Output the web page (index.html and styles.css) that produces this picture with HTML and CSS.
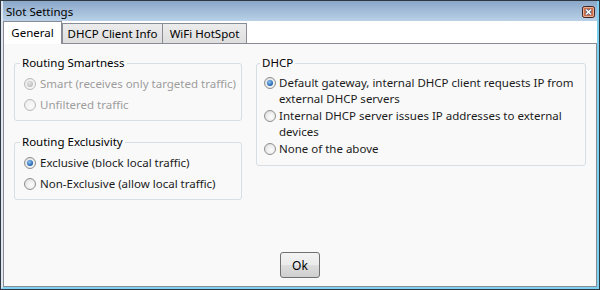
FILE: index.html
```html
<!DOCTYPE html>
<html lang="en">
<head>
  <meta charset="UTF-8">
  <title>Slot Settings</title>
  <link rel="stylesheet" href="styles.css">
</head>
<body>
  <div class="window">
    <div class="frame">
      <div class="titlebar">
        <span class="title">Slot Settings</span>
        <button class="close" title="Close">
          <svg width="13" height="12" viewBox="0 0 13 12">
            <rect x="0.5" y="0.5" width="12" height="11" rx="2" fill="#cf6f4c" stroke="#3a2520"/>
            <rect x="1.5" y="1.5" width="10" height="9" rx="1" fill="none" stroke="#eab29a"/>
            <path d="M4 3.5 L9 8.5 M9 3.5 L4 8.5" stroke="#4d5f73" stroke-width="3"/>
            <path d="M4 3.5 L9 8.5 M9 3.5 L4 8.5" stroke="#ffffff" stroke-width="1.6"/>
          </svg>
        </button>
      </div>

      <div class="tabs">
        <div class="tab active">General</div>
        <div class="tab tab-dhcp">DHCP Client Info</div>
        <div class="tab tab-wifi">WiFi HotSpot</div>
      </div>

      <div class="panel">
        <div class="columns">
          <div class="col-left">
            <fieldset class="group group-left">
              <legend>Routing Smartness</legend>
              <label class="option disabled"><span class="radio checked"></span>Smart (receives only targeted traffic)</label>
              <label class="option disabled"><span class="radio"></span>Unfiltered traffic</label>
            </fieldset>
            <fieldset class="group group-left group-second">
              <legend>Routing Exclusivity</legend>
              <label class="option"><span class="radio checked"></span>Exclusive (block local traffic)</label>
              <label class="option"><span class="radio"></span>Non-Exclusive (allow local traffic)</label>
            </fieldset>
          </div>
          <fieldset class="group group-dhcp">
            <legend>DHCP</legend>
            <label class="option"><span class="radio checked"></span><span>Default gateway, internal DHCP client requests IP from external DHCP servers</span></label>
            <label class="option"><span class="radio"></span><span>Internal DHCP server issues IP addresses to external devices</span></label>
            <label class="option"><span class="radio"></span><span>None of the above</span></label>
          </fieldset>
        </div>
        <div class="actions">
          <button class="btn">Ok</button>
        </div>
      </div>
    </div>
  </div>
</body>
</html>
```

FILE: styles.css
```css
/* Base */
* {
  box-sizing: border-box;
}

body {
  margin: 0;
  font-family: "Noto Sans", "Open Sans", sans-serif;
  font-size: 11.5px;
  color: #1b1b1b;
  background: #ffffff;
}

/* Window frame */
.window {
  width: 600px;
  height: 290px;
  border: 1px solid #2f3740;
  display: flex;
  flex-direction: column;
}

.frame {
  flex: 1;
  display: flex;
  flex-direction: column;
  background: #ffffff;
  border-left: 2px solid #dfe8f0;
  border-right: 2px solid #7fd1f1;
  border-bottom: 2px solid #7fd1f1;
}

.titlebar {
  height: 20px;
  display: flex;
  align-items: center;
  justify-content: space-between;
  padding: 0 2px 0 3px;
  background: linear-gradient(#8ba7c8, #b9d1e8);
}

.title {
  font-size: 11.5px;
  color: #000000;
}

.close {
  display: block;
  padding: 0;
  border: none;
  background: none;
  height: 12px;
  margin-top: 2px;
}

.close svg {
  display: block;
}

/* Tabs */
.tabs {
  height: 22px;
  display: flex;
  align-items: flex-end;
  position: relative;
  z-index: 1;
}

.tab {
  height: 20px;
  border: 1px solid #898c95;
  border-bottom: none;
  background: linear-gradient(#ececec, #dedede);
  color: #000000;
  font-size: 11.5px;
  line-height: 20px;
  text-align: center;
  white-space: nowrap;
}

.tab.active {
  width: 59px;
  height: 23px;
  margin-bottom: -1px;
  line-height: 21px;
  background: #ffffff;
}

.tab-dhcp {
  width: 101px;
}

.tab-wifi {
  width: 85px;
  margin-left: -1px;
}

/* Panel */
.panel {
  flex: 1;
  display: flex;
  flex-direction: column;
  border: 1px solid #898c95;
  background: #f9f9f9;
  padding: 11px 10px 8px;
}

.columns {
  display: grid;
  grid-template-columns: 228px 330px;
  column-gap: 14px;
  align-items: start;
}

/* Group boxes */
.group {
  margin: 0;
  min-width: 0;
  border: 1px solid #d5dfe5;
  border-radius: 3px;
}

.group legend {
  padding: 0 2px;
  margin-left: -4px;
  line-height: 16px;
  color: #000000;
}

.group-left {
  padding: 2px 8px 5px 9px;
}

.group-second {
  margin-top: 13px;
}

.group-dhcp {
  padding: 4px 6px 7px 7px;
}

/* Radio options */
.option {
  display: flex;
  align-items: center;
  gap: 4px;
  height: 21px;
  color: #1b1b1b;
  white-space: nowrap;
}

.group-dhcp .option {
  align-items: flex-start;
  gap: 3px;
  height: auto;
  line-height: 16px;
  margin-bottom: 1px;
  white-space: normal;
}

.group-dhcp .option .radio {
  margin-top: 2px;
}

.radio {
  flex: none;
  width: 12px;
  height: 12px;
  border-radius: 50%;
  border: 1px solid #8e8f8f;
  background: radial-gradient(circle at 60% 60%, #fdfdfd 0, #ebebeb 55%, #cfcfcf 100%);
  display: flex;
  align-items: center;
  justify-content: center;
}

.radio.checked::after {
  content: "";
  width: 6px;
  height: 6px;
  border-radius: 50%;
  background: radial-gradient(circle at 40% 35%, #93c7f2, #2368b3 65%, #0f3f7c);
}

.option.disabled {
  color: #9d9d9d;
}

.option.disabled .radio {
  border-color: #b9b9b9;
  background: radial-gradient(circle at 60% 60%, #fbfbfb 0, #f0f0f0 60%, #e2e2e2 100%);
}

.option.disabled .radio.checked::after {
  background: radial-gradient(circle at 40% 35%, #e6e6e6, #bdbdbd 70%, #a9a9a9);
}

/* Buttons */
.actions {
  margin-top: auto;
  display: flex;
  justify-content: center;
}

.btn {
  width: 40px;
  height: 26px;
  padding: 0;
  border: 1px solid #707070;
  border-radius: 3px;
  background: linear-gradient(#f3f3f3 0%, #ebebeb 48%, #dddddd 52%, #cfcfcf 100%);
  font-family: inherit;
  font-size: 12px;
  color: #000000;
}
```
